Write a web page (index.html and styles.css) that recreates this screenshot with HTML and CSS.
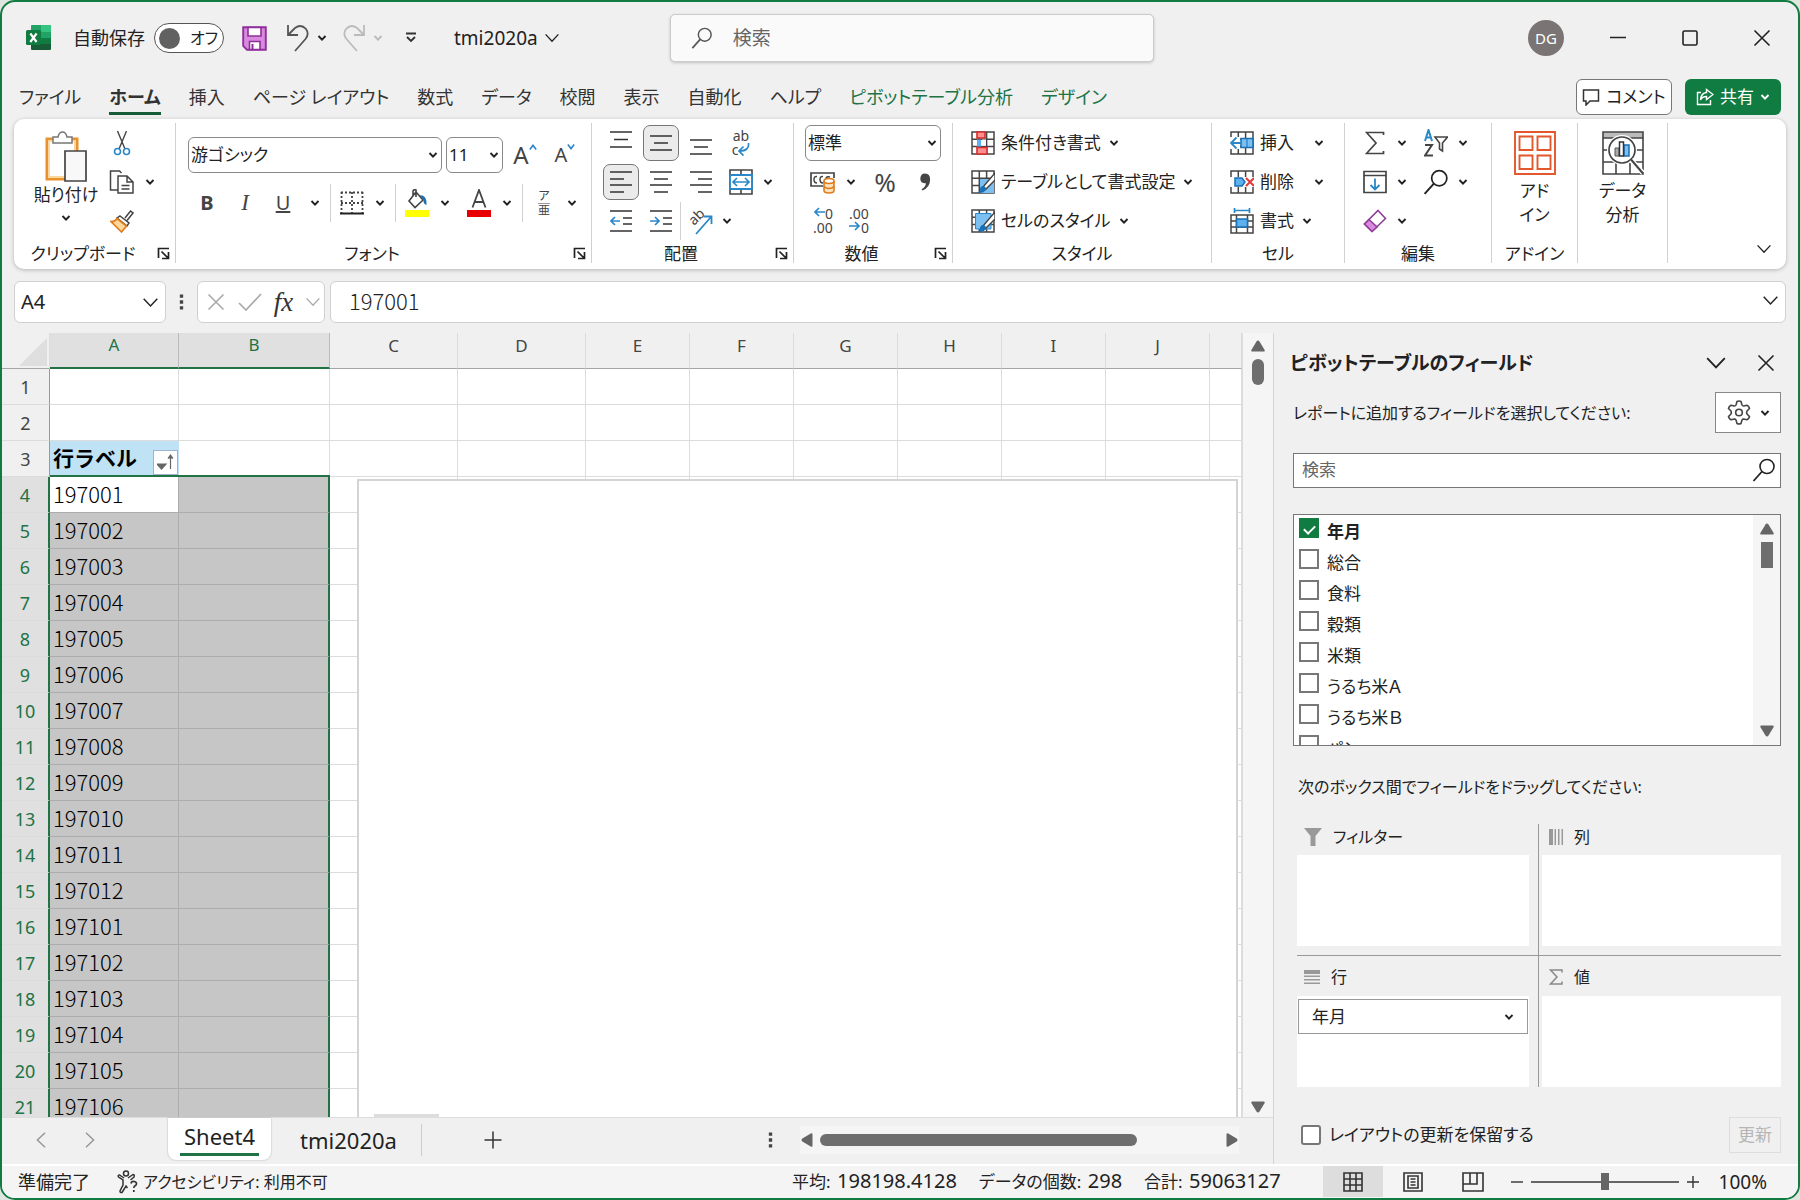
FILE: index.html
```html
<!DOCTYPE html>
<html lang="ja">
<head>
    <meta charset="UTF-8">
    <meta name="viewport" content="width=device-width, initial-scale=1.0">
    <title>tmi2020a - Excel</title>
    <link rel="stylesheet" href="styles.css">
</head>
<body>
    <!-- shared icons -->
    <svg class="sprite" aria-hidden="true">
        <symbol id="chev" viewBox="0 0 10 10"><path d="M1.5 3l3.5 3.7L8.5 3" fill="none" stroke="currentColor" stroke-width="1.9"/></symbol>
        <symbol id="chev-lg" viewBox="0 0 20 20"><path d="M2 5.5l8 8.5 8-8.5" fill="none" stroke="currentColor" stroke-width="1.7"/></symbol>
        <symbol id="cross" viewBox="0 0 20 20"><path d="M2.5 2.5l15 15M17.5 2.5l-15 15" fill="none" stroke="currentColor" stroke-width="1.6"/></symbol>
        <symbol id="lens" viewBox="0 0 24 24"><circle cx="15" cy="8.5" r="7" fill="none" stroke="currentColor" stroke-width="1.6"/><path d="M10 13.5L1.5 23" fill="none" stroke="currentColor" stroke-width="1.8"/></symbol>
        <symbol id="launch" viewBox="0 0 13 13"><path d="M1.5 11V1.5H12M4.5 4.5l6 6M11.5 5v6.5H5" fill="none" stroke="currentColor" stroke-width="1.7"/></symbol>
        <symbol id="tri-up" viewBox="0 0 14 12"><path d="M7 .5q.9 0 1.5.9l5 8.3q.8 1.8-1 1.8h-11q-1.8 0-1-1.8l5-8.3Q6.1.5 7 .5z" fill="#666"/></symbol>
        <symbol id="dots" viewBox="0 0 6 20"><path d="M1 1h4v4H1zM1 8h4v4H1zM1 15h4v4H1z" fill="#444"/></symbol>
        <symbol id="table-bg" viewBox="0 0 24 24"><path d="M1 1h22v22H1zM1 8.3h22M1 15.6h22M8.3 1v22M15.6 1v22" fill="none" stroke="#444" stroke-width="1.5"/></symbol>
    </svg>

    <div class="window">
        <header class="titlebar">
            <svg class="app-logo" viewBox="0 0 25 26">
                <path d="M6 0h18q1 0 1 1v7H5V1q0-1 1-1z" fill="#21a366"/><path d="M15 0h9q1 0 1 1v6H15z" fill="#33c481"/>
                <path d="M5 7h10v7H5z" fill="#107c41"/><path d="M15 7h10v7H15z" fill="#21a366"/>
                <path d="M5 13h20v11q0 1-1 1H6q-1 0-1-1z" fill="#185c37"/><path d="M15 13h10v6H15z" fill="#107c41"/>
                <rect y="5" width="15" height="15" rx="1.5" fill="#107c41"/>
                <path d="M4.3 8.5l6.3 8.5M10.6 8.5L4.3 17" stroke="#fff" stroke-width="2.1"/>
            </svg>
            <span class="autosave">自動保存</span>
            <button class="toggle" aria-label="自動保存"><span class="knob"></span>オフ</button>
            <button class="plain save" aria-label="上書き保存">
                <svg width="25" height="25" viewBox="0 0 25 25"><path d="M1.2 1.2h22.6v22.6H5l-3.8-4z" fill="#d98ae0" stroke="#8f2f99" stroke-width="1.9"/><path d="M6 1.5h13v8.5H6zM7.5 15.5h10.5v8H7.5z" fill="#fff" stroke="#8f2f99" stroke-width="1.6"/><path d="M10.5 18v5.5" stroke="#8f2f99" stroke-width="2"/></svg>
            </button>
            <button class="plain undo" aria-label="元に戻す">
                <svg width="24" height="28" viewBox="0 0 24 28"><path d="M2 1v10h10M2.5 10.5L9 4q6-4.500 11 1 3.500 5-.5 10L9 27" fill="none" stroke="#555" stroke-width="1.8"/></svg>
                <svg class="chev"><use href="#chev"/></svg>
            </button>
            <button class="plain undo redo" aria-label="やり直し">
                <svg width="24" height="28" viewBox="0 0 24 28"><path d="M22 1v10H12M21.5 10.5L15 4Q9-.5 4 5q-3.500 5 .5 10L15 27" fill="none" stroke="#bbb" stroke-width="1.8"/></svg>
                <svg class="chev"><use href="#chev"/></svg>
            </button>
            <button class="plain customize" aria-label="クイック アクセス ツール バー">
                <svg width="12" height="12" viewBox="0 0 12 12"><path d="M1 1.5h10M2 5l4 4 4-4" fill="none" stroke="#333" stroke-width="1.9"/></svg>
            </button>
            <button class="plain filename">tmi2020a <svg width="16" height="16"><use href="#chev-lg"/></svg></button>
            <label class="search">
                <svg width="22" height="22"><use href="#lens"/></svg>
                <input type="search" placeholder="検索" aria-label="検索">
            </label>
            <div class="win-buttons">
                <button class="avatar">DG</button>
                <button class="plain" aria-label="最小化"><svg width="18" height="18" viewBox="0 0 18 18"><path d="M1 8.5h16" stroke="#222" stroke-width="1.6"/></svg></button>
                <button class="plain" aria-label="最大化"><svg width="18" height="18" viewBox="0 0 18 18"><rect x="2" y="2" width="14" height="14" rx="1.5" fill="none" stroke="#222" stroke-width="1.6"/></svg></button>
                <button class="plain" aria-label="閉じる"><svg width="20" height="20"><use href="#cross"/></svg></button>
            </div>
        </header>

        <nav class="tabs">
            <a href="#">ファイル</a>
            <a href="#" class="active">ホーム</a>
            <a href="#">挿入</a>
            <a href="#">ページ レイアウト</a>
            <a href="#">数式</a>
            <a href="#">データ</a>
            <a href="#">校閲</a>
            <a href="#">表示</a>
            <a href="#">自動化</a>
            <a href="#">ヘルプ</a>
            <a href="#" class="context">ピボットテーブル分析</a>
            <a href="#" class="context">デザイン</a>
            <div class="tab-actions">
                <button class="comment"><svg width="18" height="18" viewBox="0 0 18 18"><path d="M1.5 2h15v11H8l-4 4v-4H1.5z" fill="none" stroke="#333" stroke-width="1.5"/></svg>コメント</button>
                <button class="share"><svg width="18" height="18" viewBox="0 0 18 18"><path d="M5 4.5H1.5v12h13V12M10.5 1.5l6.5 5-6.5 5V8.5Q6 8.5 4.500 12 5 5 10.5 4.500z" fill="none" stroke="#fff" stroke-width="1.4"/></svg>共有<svg class="chev"><use href="#chev"/></svg></button>
            </div>
        </nav>

        <section class="ribbon">
            <div class="group g-clip">
                <div class="body">
                    <button class="big paste">
                        <svg width="42" height="52" viewBox="0 0 42 52"><path d="M2 8h30v40H2z" fill="#fff" stroke="#e8912d" stroke-width="3"/><path d="M4 10h26v36H4z" fill="none" stroke="#fbd79b" stroke-width="2"/><path d="M8 12V6h5q1-5 4.500-5T22 6h5v6z" fill="#fff" stroke="#777" stroke-width="1.5"/><path d="M20 20h21v30H20z" fill="#f8f8f8" stroke="#444" stroke-width="1.7"/></svg>
                        貼り付け
                        <svg class="chev"><use href="#chev"/></svg>
                    </button>
                    <div class="rows">
                        <div class="row"><button class="ib" aria-label="切り取り"><svg width="18" height="26" viewBox="0 0 18 26"><path d="M4.500 1l7.500 18M13.500 1L6 19" stroke="#444" stroke-width="1.4"/><circle cx="4.5" cy="21.5" r="3" fill="none" stroke="#2b88c8" stroke-width="1.6"/><circle cx="13.5" cy="21.5" r="3" fill="none" stroke="#2b88c8" stroke-width="1.6"/></svg></button></div>
                        <div class="row"><button class="ib" aria-label="コピー"><svg width="26" height="24" viewBox="0 0 26 24"><path d="M9 20H1.5V1h9l2 2" fill="none" stroke="#444" stroke-width="1.5"/><path d="M9 6h9l6 6v11H9zM18 6v6h6M12.5 15.5h8M12.5 19h8" fill="none" stroke="#444" stroke-width="1.5"/></svg></button><button class="cv" aria-label="コピーの種類"><svg class="chev"><use href="#chev"/></svg></button></div>
                        <div class="row"><button class="ib" aria-label="書式のコピー"><svg width="24" height="24" viewBox="0 0 24 24"><path d="M15 9l5.500-7 2.500 2-6 7.500" fill="none" stroke="#444" stroke-width="1.5"/><path d="M10 7l9 7-2 3-10-8z" fill="#fff" stroke="#444" stroke-width="1.5"/><path d="M7 9.500l9.500 7.500-5 6L1 12.500q4 .5 6-3z" fill="#fbd79b" stroke="#e07b1c" stroke-width="1.6"/></svg></button></div>
                    </div>
                </div>
                <div class="caption"><span>クリップボード</span><button class="launch" aria-label="クリップボードの設定"><svg><use href="#launch"/></svg></button></div>
            </div>

            <div class="group g-font">
                <div class="body two">
                    <div class="row">
                        <span class="select font-name"><select aria-label="フォント"><option>游ゴシック</option></select><svg class="chev"><use href="#chev"/></svg></span>
                        <span class="select font-size"><select aria-label="フォント サイズ"><option>11</option></select><svg class="chev"><use href="#chev"/></svg></span>
                        <button class="ib letter grow" aria-label="フォント サイズの拡大">A<svg width="8" height="8" viewBox="0 0 10 10"><path d="M1 8l4-5 4 5" fill="none" stroke="#2b88c8" stroke-width="2"/></svg></button>
                        <button class="ib letter shrink" aria-label="フォント サイズの縮小">A<svg width="8" height="8" viewBox="0 0 10 10"><path d="M1 2l4 5 4-5" fill="none" stroke="#2b88c8" stroke-width="2"/></svg></button>
                    </div>
                    <div class="row styles">
                        <button class="ib letter"><b>B</b></button>
                        <button class="ib letter"><i>I</i></button>
                        <button class="ib letter"><u>U</u></button>
                        <button class="cv" aria-label="下線の種類"><svg class="chev"><use href="#chev"/></svg></button>
                        <span class="sep"></span>
                        <button class="ib" aria-label="罫線"><svg width="24" height="24" viewBox="0 0 24 24"><path d="M1 1.5h22M1 12h22M1.5 1v21M12 1v21M22.5 1v21" fill="none" stroke="#444" stroke-width="1.8" stroke-dasharray="2 2"/><path d="M0 22.5h24" stroke="#222" stroke-width="2.2"/></svg></button>
                        <button class="cv" aria-label="罫線の種類"><svg class="chev"><use href="#chev"/></svg></button>
                        <span class="sep"></span>
                        <button class="ib" aria-label="塗りつぶしの色"><svg width="24" height="28" viewBox="0 0 24 28"><path d="M0 21h24v7H0z" fill="#ff0"/><path d="M11 3l7 8-8 7.500-6-6.500zM11 8V1q-2-1-3 1v5" fill="none" stroke="#444" stroke-width="1.6"/><path d="M15 6q7 0 6.500 10-3.500-1-3-5z" fill="#1a6fb5"/></svg></button>
                        <button class="cv" aria-label="塗りつぶしの色の一覧"><svg class="chev"><use href="#chev"/></svg></button>
                        <button class="ib" aria-label="フォントの色"><svg width="24" height="28" viewBox="0 0 24 28"><path d="M0 21h24v7H0z" fill="#e80000"/><path d="M5.500 18.500L12 1l6.500 17.500M8 13h8" fill="none" stroke="#444" stroke-width="1.8"/></svg></button>
                        <button class="cv" aria-label="フォントの色の一覧"><svg class="chev"><use href="#chev"/></svg></button>
                        <span class="sep"></span>
                        <button class="ib ruby"><span>ア</span><span>亜</span></button>
                        <button class="cv" aria-label="ふりがなの設定"><svg class="chev"><use href="#chev"/></svg></button>
                    </div>
                </div>
                <div class="caption"><span>フォント</span><button class="launch" aria-label="フォントの設定"><svg><use href="#launch"/></svg></button></div>
            </div>

            <div class="group g-align">
                <div class="body rows">
                    <div class="row">
                        <button class="ib" aria-label="上揃え"><svg class="lines"><path d="M0 1h22M4 8.500h14M0 16h22"/></svg></button>
                        <button class="ib on" aria-label="上下中央揃え"><svg class="lines"><path d="M0 5h22M4 12h14M0 19h22"/></svg></button>
                        <button class="ib" aria-label="下揃え"><svg class="lines"><path d="M0 9h22M4 16h14M0 23h22"/></svg></button>
                        <button class="ib wrap"><span>ab</span><span>c<svg width="12" height="13" viewBox="0 0 12 13"><path d="M10.5 0q1 8-9 8M5.500 3.500L1 8l4.500 4.500" fill="none" stroke="#2b88c8" stroke-width="1.7"/></svg></span></button>
                    </div>
                    <div class="row">
                        <button class="ib on" aria-label="左揃え"><svg class="lines"><path d="M0 2h22M0 9h14M0 15h22M0 22h14"/></svg></button>
                        <button class="ib" aria-label="中央揃え"><svg class="lines"><path d="M0 2h22M4 9h14M0 15h22M4 22h14"/></svg></button>
                        <button class="ib" aria-label="右揃え"><svg class="lines"><path d="M0 2h22M8 9h14M0 15h22M8 22h14"/></svg></button>
                        <button class="ib" aria-label="セルを結合して中央揃え"><svg width="24" height="26" viewBox="0 0 24 26"><path d="M1 1h22v24H1zM12 1v24" fill="none" stroke="#444" stroke-width="1.6"/><path d="M1 6h22v14H1z" fill="#fff" stroke="#2b88c8" stroke-width="1.9"/><path d="M4 13h16M8 9l-4 4 4 4M16 9l4 4-4 4" fill="none" stroke="#2b88c8" stroke-width="1.7"/></svg></button>
                        <button class="cv" aria-label="結合の種類"><svg class="chev"><use href="#chev"/></svg></button>
                    </div>
                    <div class="row">
                        <button class="ib" aria-label="インデントを減らす"><svg class="lines"><path d="M0 2h22M13 9h9M13 15h9M0 22h22"/><path class="blue" d="M10 12H1M5 8l-4 4 4 4"/></svg></button>
                        <button class="ib" aria-label="インデントを増やす"><svg class="lines"><path d="M0 2h22M13 9h9M13 15h9M0 22h22"/><path class="blue" d="M0 12h9M5 8l4 4-4 4"/></svg></button>
                        <span class="sep"></span>
                        <button class="ib" aria-label="方向"><svg width="28" height="28" viewBox="0 0 28 28"><text transform="translate(8 19) rotate(-45)" font-size="14" fill="#444">ab</text><path d="M10 27L25 10M17.500 9.500H25.500V17" fill="none" stroke="#2b88c8" stroke-width="1.8"/></svg></button>
                        <button class="cv" aria-label="方向の種類"><svg class="chev"><use href="#chev"/></svg></button>
                    </div>
                </div>
                <div class="caption"><span>配置</span><button class="launch" aria-label="配置の設定"><svg><use href="#launch"/></svg></button></div>
            </div>

            <div class="group g-num">
                <div class="body rows">
                    <div class="row"><span class="select num-format"><select aria-label="数値の書式"><option>標準</option></select><svg class="chev"><use href="#chev"/></svg></span></div>
                    <div class="row">
                        <button class="ib" aria-label="通貨表示形式"><svg width="26" height="24" viewBox="0 0 26 24"><path d="M13 16H1V3h23v5" fill="none" stroke="#444" stroke-width="1.7"/><path d="M7 6.500Q4 6 4 9.500t3 3.500M13 6.500q-3-.5-3 3t3 3.500M20 7q-4-1-4 2" fill="none" stroke="#444" stroke-width="1.5"/><path d="M14 11v9.500q0 2.500 5 2.500t5-2.500V11" fill="#fde3bd" stroke="#e07b1c" stroke-width="1.6"/><ellipse cx="19" cy="11" rx="5" ry="2.5" fill="#fff" stroke="#e07b1c" stroke-width="1.6"/><path d="M14 16q1 2.500 5 2.500t5-2.500" fill="none" stroke="#e07b1c" stroke-width="1.5"/></svg></button>
                        <button class="cv" aria-label="通貨の種類"><svg class="chev"><use href="#chev"/></svg></button>
                        <button class="ib percent">%</button>
                        <button class="ib comma" aria-label="桁区切りスタイル"><svg width="12" height="20" viewBox="0 0 14 22"><path d="M7 1q6 0 6 7 0 9-9 13l-1-1.500q5-3 5-7-6 .5-6.500-5Q1.500 1 7 1z" fill="#444"/></svg></button>
                    </div>
                    <div class="row">
                        <button class="ib decimal"><span><svg width="12" height="10" viewBox="0 0 12 10"><path d="M12 5H2M6 1L2 5l4 4" fill="none" stroke="#2b88c8" stroke-width="1.7"/></svg>0</span><span>.00</span></button>
                        <button class="ib decimal"><span>.00</span><span><svg width="12" height="10" viewBox="0 0 12 10"><path d="M0 5h10M6 1l4 4-4 4" fill="none" stroke="#2b88c8" stroke-width="1.7"/></svg>0</span></button>
                    </div>
                </div>
                <div class="caption"><span>数値</span><button class="launch" aria-label="数値の設定"><svg><use href="#launch"/></svg></button></div>
            </div>

            <div class="group g-style">
                <div class="body rows">
                    <div class="row"><button class="tb"><svg width="24" height="24" viewBox="0 0 24 24"><use href="#table-bg"/><path d="M6 1h8v6H6zM6 16.500h10V23H6z" fill="#ff8f8f" stroke="#d92b2b" stroke-width="1.6"/><path d="M6 8.500h4v7H6z" fill="#5db1ec"/><path d="M11 8.500h4v6h-4z" fill="#fff"/></svg>条件付き書式<svg class="chev"><use href="#chev"/></svg></button></div>
                    <div class="row"><button class="tb"><svg width="24" height="24" viewBox="0 0 24 24"><use href="#table-bg"/><path d="M9 9h14v14H9z" fill="#7cc0f2"/><path d="M24 3L12 17l2.500 2.500L24 10z" fill="#fff" stroke="#444" stroke-width="1.4"/><path d="M12 16q3 0 3 3.500-2 4-8 3.500 3-1.500 2-4 .5-3 3-3z" fill="#1a6fb5"/></svg>テーブルとして書式設定<svg class="chev"><use href="#chev"/></svg></button></div>
                    <div class="row"><button class="tb"><svg width="24" height="24" viewBox="0 0 24 24"><use href="#table-bg"/><path d="M4.500 4.500H20V20H4.500z" fill="#7cc0f2" stroke="#2b88c8"/><path d="M24 3L12 17l2.500 2.500L24 10z" fill="#fff" stroke="#444" stroke-width="1.4"/><path d="M12 16q3 0 3 3.500-2 4-8 3.500 3-1.500 2-4 .5-3 3-3z" fill="#1a6fb5"/></svg>セルのスタイル<svg class="chev"><use href="#chev"/></svg></button></div>
                </div>
                <div class="caption"><span>スタイル</span></div>
            </div>

            <div class="group g-cells">
                <div class="body rows">
                    <div class="row"><button class="tb wide"><svg width="24" height="24" viewBox="0 0 24 24"><use href="#table-bg"/><path d="M0 6h10v12H0z" fill="#fff"/><path d="M11 7.500h12v9H11z" fill="#7cc0f2" stroke="#1a6fb5" stroke-width="1.5"/><path d="M17 7.500v9" stroke="#1a6fb5"/><path d="M12 12H1.500M6.500 6.500L1 12l5.500 5.500" fill="none" stroke="#2b88c8" stroke-width="1.8"/></svg>挿入<svg class="chev"><use href="#chev"/></svg></button></div>
                    <div class="row"><button class="tb wide"><svg width="24" height="24" viewBox="0 0 24 24"><use href="#table-bg"/><path d="M0 7h24v10H0z" fill="#fff"/><path d="M5 8h7l3 4-3 4H5z" fill="#5db1ec" stroke="#1a6fb5" stroke-width="1.5"/><path d="M16 8l8 8M24 8l-8 8" stroke="#e03a3a" stroke-width="2"/></svg>削除<svg class="chev"><use href="#chev"/></svg></button></div>
                    <div class="row"><button class="tb"><svg width="24" height="26" viewBox="0 0 24 26"><path d="M1 7h22v18H1zM1 13h22M1 19h22M6.500 7v18M17.500 7v18" fill="none" stroke="#444" stroke-width="1.5"/><path d="M6.500 11h11v8h-11z" fill="#5db1ec" stroke="#1a6fb5" stroke-width="1.5"/><path d="M4 2.500h16M4.500 0v5M19.500 0v5" stroke="#2b88c8" stroke-width="1.7"/></svg>書式<svg class="chev"><use href="#chev"/></svg></button></div>
                </div>
                <div class="caption"><span>セル</span></div>
            </div>

            <div class="group g-edit">
                <div class="body rows">
                    <div class="row">
                        <button class="ib" aria-label="オート SUM"><svg width="20" height="24" viewBox="0 0 20 24"><path d="M18.500 4V1.500H1.500L11 12 1.500 22.500h17V20" fill="none" stroke="#444" stroke-width="1.7"/></svg></button><button class="cv" aria-label="オート SUM の種類"><svg class="chev"><use href="#chev"/></svg></button>
                        <button class="ib" aria-label="並べ替えとフィルター"><svg width="24" height="28" viewBox="0 0 24 28"><path d="M1 12L4.500 1 8 12M2.500 8.500h4" fill="none" stroke="#2b88c8" stroke-width="2"/><path d="M1 16h7L1 26.500h8" fill="none" stroke="#444" stroke-width="2"/><path d="M11 8h12.500l-5 6v8l-3-2v-6z" fill="none" stroke="#444" stroke-width="1.6"/></svg></button><button class="cv" aria-label="並べ替えの種類"><svg class="chev"><use href="#chev"/></svg></button>
                    </div>
                    <div class="row">
                        <button class="ib" aria-label="フィル"><svg width="24" height="24" viewBox="0 0 24 24"><path d="M1 1.500h22v21H1zM1 5.500h22" fill="none" stroke="#444" stroke-width="1.7"/><path d="M12 8.500v11M7.500 15l4.500 4.500 4.500-4.500" fill="none" stroke="#2b88c8" stroke-width="1.8"/></svg></button><button class="cv" aria-label="フィルの種類"><svg class="chev"><use href="#chev"/></svg></button>
                        <button class="ib" aria-label="検索と選択"><svg width="26" height="26"><use href="#lens"/></svg></button><button class="cv" aria-label="検索の種類"><svg class="chev"><use href="#chev"/></svg></button>
                    </div>
                    <div class="row">
                        <button class="ib" aria-label="クリア"><svg width="24" height="24" viewBox="0 0 24 24"><path d="M15 1.500l7.500 8L9 22.500 1.500 15z" fill="#fff" stroke="#8f3f99" stroke-width="1.6"/><path d="M6 10.500l8 7.500-5 4.500L1.500 15z" fill="#d98ae0" stroke="#8f3f99" stroke-width="1.6"/></svg></button><button class="cv" aria-label="クリアの種類"><svg class="chev"><use href="#chev"/></svg></button>
                    </div>
                </div>
                <div class="caption"><span>編集</span></div>
            </div>

            <div class="group g-addin">
                <div class="body">
                    <button class="big"><svg width="42" height="44" viewBox="0 0 42 44"><path d="M1 1h40v42H1zM5.500 5.500h13V19h-13zM23.500 5.500h13V19h-13zM5.500 24.500h13V38h-13zM23.500 24.500h13V38h-13z" fill="none" stroke="#e2572b" stroke-width="1.9"/></svg><span>アド</span><span>イン</span></button>
                </div>
                <div class="caption"><span>アドイン</span></div>
            </div>

            <div class="group g-data">
                <div class="body">
                    <button class="big"><svg width="42" height="44" viewBox="0 0 42 44"><path d="M1 1h40v6H1z" fill="#bbb"/><path d="M1 1h40v42H1zM1 7h40M1 19h40M1 31h40M14 31v12M28 31v12" fill="none" stroke="#444" stroke-width="1.6"/><circle cx="20" cy="19" r="15" fill="#fff"/><path d="M13 17h4v8h-4z" fill="#aaa" stroke="#555"/><path d="M22 14h5v11h-5z" fill="#7cc0f2" stroke="#1a6fb5" stroke-width="1.5"/><path d="M17.500 11h4v14h-4z" fill="#fff" stroke="#333" stroke-width="1.5"/><circle cx="20" cy="19" r="13" fill="none" stroke="#444" stroke-width="1.7"/><path d="M29 29l12 13" stroke="#fff" stroke-width="5"/><path d="M29 28.500l12 14" stroke="#444" stroke-width="2"/></svg><span>データ</span><span>分析</span></button>
                </div>
                <div class="caption"></div>
            </div>
            <button class="plain collapse" aria-label="リボンを折りたたむ"><svg width="16" height="16"><use href="#chev-lg"/></svg></button>
        </section>

        <div class="formula-bar">
            <label class="name-box"><input type="text" value="A4" aria-label="名前ボックス"><svg width="17" height="17"><use href="#chev-lg"/></svg></label>
            <svg class="grip" width="5" height="18"><use href="#dots"/></svg>
            <div class="fx-box">
                <button class="plain" aria-label="キャンセル"><svg width="20" height="20"><use href="#cross"/></svg></button>
                <button class="plain" aria-label="入力"><svg width="24" height="18" viewBox="0 0 24 18"><path d="M1 10l7 7L23 1" fill="none" stroke="currentColor" stroke-width="1.7"/></svg></button>
                <button class="plain fx">fx</button>
                <button class="plain" aria-label="関数の一覧"><svg width="16" height="16"><use href="#chev-lg"/></svg></button>
            </div>
            <label class="formula"><input type="text" value="197001" aria-label="数式バー"><svg width="17" height="17"><use href="#chev-lg"/></svg></label>
        </div>

        <main class="main">
            <div class="sheet-area">
                <div class="grid-row">
                    <div class="grid-wrap">
                        <table class="grid">
                            <colgroup><col class="c-head"><col class="c-a"><col class="c-b"><col class="c-c"><col class="c-c"><col class="c-e"><col class="c-e"><col class="c-e"><col class="c-e"><col class="c-e"><col class="c-e"><col></colgroup>
                            <thead>
                                <tr><th class="corner"><svg width="28" height="28" viewBox="0 0 28 28"><path d="M28 0v28H0z" fill="#dedede"/></svg></th><th class="sel">A</th><th class="sel">B</th><th>C</th><th>D</th><th>E</th><th>F</th><th>G</th><th>H</th><th>I</th><th>J</th><th></th></tr>
                            </thead>
                            <tbody>
                                <tr><th>1</th><td></td><td></td><td></td><td></td><td></td><td></td><td></td><td></td><td></td><td></td><td></td></tr>
                                <tr><th>2</th><td></td><td></td><td></td><td></td><td></td><td></td><td></td><td></td><td></td><td></td><td></td></tr>
                                <tr><th>3</th><td class="pivot-head"><div>行ラベル<button aria-label="並べ替え"><svg width="18" height="18" viewBox="0 0 18 18"><path d="M0 11h9l-4.500 5zM13.500 16V2.500M11 5.500l2.500-3.500L16 5.500" fill="#666" stroke="#666" stroke-width="1.2"/></svg></button></div></td><td></td><td></td><td></td><td></td><td></td><td></td><td></td><td></td><td></td><td></td></tr>
                                <tr class="picked first"><th>4</th><td>197001</td><td></td><td></td><td></td><td></td><td></td><td></td><td></td><td></td><td></td><td></td></tr>
                                <tr class="picked"><th>5</th><td>197002</td><td></td><td></td><td></td><td></td><td></td><td></td><td></td><td></td><td></td><td></td></tr>
                                <tr class="picked"><th>6</th><td>197003</td><td></td><td></td><td></td><td></td><td></td><td></td><td></td><td></td><td></td><td></td></tr>
                                <tr class="picked"><th>7</th><td>197004</td><td></td><td></td><td></td><td></td><td></td><td></td><td></td><td></td><td></td><td></td></tr>
                                <tr class="picked"><th>8</th><td>197005</td><td></td><td></td><td></td><td></td><td></td><td></td><td></td><td></td><td></td><td></td></tr>
                                <tr class="picked"><th>9</th><td>197006</td><td></td><td></td><td></td><td></td><td></td><td></td><td></td><td></td><td></td><td></td></tr>
                                <tr class="picked"><th>10</th><td>197007</td><td></td><td></td><td></td><td></td><td></td><td></td><td></td><td></td><td></td><td></td></tr>
                                <tr class="picked"><th>11</th><td>197008</td><td></td><td></td><td></td><td></td><td></td><td></td><td></td><td></td><td></td><td></td></tr>
                                <tr class="picked"><th>12</th><td>197009</td><td></td><td></td><td></td><td></td><td></td><td></td><td></td><td></td><td></td><td></td></tr>
                                <tr class="picked"><th>13</th><td>197010</td><td></td><td></td><td></td><td></td><td></td><td></td><td></td><td></td><td></td><td></td></tr>
                                <tr class="picked"><th>14</th><td>197011</td><td></td><td></td><td></td><td></td><td></td><td></td><td></td><td></td><td></td><td></td></tr>
                                <tr class="picked"><th>15</th><td>197012</td><td></td><td></td><td></td><td></td><td></td><td></td><td></td><td></td><td></td><td></td></tr>
                                <tr class="picked"><th>16</th><td>197101</td><td></td><td></td><td></td><td></td><td></td><td></td><td></td><td></td><td></td><td></td></tr>
                                <tr class="picked"><th>17</th><td>197102</td><td></td><td></td><td></td><td></td><td></td><td></td><td></td><td></td><td></td><td></td></tr>
                                <tr class="picked"><th>18</th><td>197103</td><td></td><td></td><td></td><td></td><td></td><td></td><td></td><td></td><td></td><td></td></tr>
                                <tr class="picked"><th>19</th><td>197104</td><td></td><td></td><td></td><td></td><td></td><td></td><td></td><td></td><td></td><td></td></tr>
                                <tr class="picked"><th>20</th><td>197105</td><td></td><td></td><td></td><td></td><td></td><td></td><td></td><td></td><td></td><td></td></tr>
                                <tr class="picked"><th>21</th><td>197106</td><td></td><td></td><td></td><td></td><td></td><td></td><td></td><td></td><td></td><td></td></tr>
                            </tbody>
                        </table>
                        <!-- empty pivot chart floating over the cells -->
                        <div class="chart"><span class="chart-button"></span></div>
                    </div>
                    <div class="vscroll">
                        <svg class="arrow"><use href="#tri-up"/></svg>
                        <span class="thumb"></span>
                        <svg class="arrow down"><use href="#tri-up"/></svg>
                    </div>
                </div>
                <div class="sheet-bar">
                    <button class="plain nav" aria-label="前のシート"><svg class="left" width="18" height="18"><use href="#chev-lg"/></svg></button>
                    <button class="plain nav" aria-label="次のシート"><svg class="right" width="18" height="18"><use href="#chev-lg"/></svg></button>
                    <button class="sheet-tab current"><span>Sheet4</span></button>
                    <button class="sheet-tab">tmi2020a</button>
                    <button class="plain add-sheet" aria-label="新しいシート"><svg width="18" height="18" viewBox="0 0 18 18"><path d="M9 .5v17M.5 9h17" stroke="#333" stroke-width="1.5"/></svg></button>
                    <svg class="grip" width="5" height="18"><use href="#dots"/></svg>
                    <div class="hscroll">
                        <svg class="arrow left"><use href="#tri-up"/></svg>
                        <span class="thumb"></span>
                        <svg class="arrow right"><use href="#tri-up"/></svg>
                    </div>
                </div>
            </div>

            <aside class="pane">
                <div class="pane-title">
                    <h2>ピボットテーブルのフィールド</h2>
                    <button class="plain" aria-label="作業ウィンドウのオプション"><svg width="24" height="22"><use href="#chev-lg"/></svg></button>
                    <button class="plain" aria-label="閉じる"><svg width="20" height="20"><use href="#cross"/></svg></button>
                </div>
                <div class="pane-intro">
                    <p>レポートに追加するフィールドを選択してください:</p>
                    <button class="gear" aria-label="ツール"><svg width="26" height="26" viewBox="0 0 26 26"><path d="M10 5L11 1.500q2-1 4 0L16 5q.5 1 1.500 1l3.500-.8q2 1 2.500 3.300L21 11q-.6 1.500 0 3l2.500 2.500q-.5 2.300-2.500 3.300L17.500 19q-1 0-1.500 1l-1 3.500q-2 1-4 0L10 20q-.5-1-1.500-1l-3.500.8q-2-1-2.500-3.300L5 14q.6-1.500 0-3L2.500 8.500Q3 6.200 5 5.200L8.500 6Q9.500 6 10 5z" fill="none" stroke="#444" stroke-width="1.6" stroke-linejoin="round"/><circle cx="13" cy="12.5" r="3.300" fill="none" stroke="#444" stroke-width="1.6"/></svg><svg class="chev"><use href="#chev"/></svg></button>
                </div>
                <label class="pane-search"><input type="search" placeholder="検索" aria-label="フィールドの検索"><svg width="24" height="24"><use href="#lens"/></svg></label>
                <div class="fields">
                    <div class="field-list">
                        <label class="checked"><input type="checkbox" checked>年月</label>
                        <label><input type="checkbox">総合</label>
                        <label><input type="checkbox">食料</label>
                        <label><input type="checkbox">穀類</label>
                        <label><input type="checkbox">米類</label>
                        <label><input type="checkbox">うるち米Ａ</label>
                        <label><input type="checkbox">うるち米Ｂ</label>
                        <label><input type="checkbox">パン</label>
                    </div>
                    <div class="list-scroll">
                        <svg class="arrow"><use href="#tri-up"/></svg>
                        <span class="thumb"></span>
                        <svg class="arrow down"><use href="#tri-up"/></svg>
                    </div>
                </div>
                <p class="drag-hint">次のボックス間でフィールドをドラッグしてください:</p>
                <div class="zones">
                    <div class="zone">
                        <h3><svg width="18" height="18" viewBox="0 0 18 18"><path d="M0 0h18l-6.500 8v10h-5V8z" fill="#999"/></svg>フィルター</h3>
                        <div class="drop"></div>
                    </div>
                    <div class="zone">
                        <h3><svg width="14" height="16" viewBox="0 0 14 16"><path d="M0 0h4v16H0zM5.500 0H7v16H5.500zM9 0h1.500v16H9zM12.500 0H14v16h-1.500z" fill="#999"/></svg>列</h3>
                        <div class="drop"></div>
                    </div>
                    <div class="zone">
                        <h3><svg width="16" height="14" viewBox="0 0 16 14"><path d="M0 0h16v4H0zM0 5.500h16V7H0zM0 9h16v1.500H0zM0 12.500h16V14H0z" fill="#999"/></svg>行</h3>
                        <div class="drop"><button class="pill">年月<svg class="chev"><use href="#chev"/></svg></button></div>
                    </div>
                    <div class="zone">
                        <h3><svg width="14" height="16" viewBox="0 0 14 16"><path d="M13 3.500V1H1.500L8 8l-6.500 7H13v-2.500" fill="none" stroke="#888" stroke-width="1.5"/></svg>値</h3>
                        <div class="drop"></div>
                    </div>
                </div>
                <div class="pane-foot">
                    <label><input type="checkbox">レイアウトの更新を保留する</label>
                    <button disabled>更新</button>
                </div>
            </aside>
        </main>

        <footer class="status">
            <span>準備完了</span>
            <button class="plain access"><svg width="22" height="24" viewBox="0 0 22 24"><circle cx="9" cy="3.5" r="2.5" fill="none" stroke="#333" stroke-width="1.5"/><path d="M7 8L2.500 5Q.5 5 1.500 7L6 10v5l-3 6q0 2 2 1.500L9 16l1.500 2M11 8l5-3.500q2 .5 1 2.500l-3.500 3" fill="none" stroke="#333" stroke-width="1.5"/><path d="M14 13.500q.5-2.500 3.500-2 3 1 1.500 3.500-2 1-2.200 3M16.800 20v2" fill="none" stroke="#333" stroke-width="1.7"/></svg>アクセシビリティ: 利用不可</button>
            <div class="stats"><span>平均: <em>198198.4128</em></span><span>データの個数: <em>298</em></span><span>合計: <em>59063127</em></span></div>
            <div class="views">
                <button class="on" aria-label="標準"><svg width="20" height="20" viewBox="0 0 20 20"><path d="M1 1h18v18H1zM1 7h18M1 13h18M7 1v18M13 1v18" fill="none" stroke="#333" stroke-width="1.6"/></svg></button>
                <button aria-label="ページ レイアウト"><svg width="20" height="20" viewBox="0 0 20 20"><path d="M1 1h18v18H1zM5 4h10v12H5zM7.500 7h5M7.500 10h5M7.500 13h5" fill="none" stroke="#333" stroke-width="1.6"/></svg></button>
                <button aria-label="改ページ プレビュー"><svg width="22" height="20" viewBox="0 0 22 20"><path d="M1 1h20v18H1zM1 12h14V1M8 1v11" fill="none" stroke="#333" stroke-width="1.6"/></svg></button>
            </div>
            <div class="zoom">
                <button class="plain" aria-label="縮小"><svg width="12" height="12" viewBox="0 0 12 12"><path d="M0 6h12" stroke="#333" stroke-width="1.4"/></svg></button>
                <input type="range" min="10" max="190" value="100" aria-label="ズーム">
                <button class="plain" aria-label="拡大"><svg width="12" height="12" viewBox="0 0 12 12"><path d="M0 6h12M6 0v12" stroke="#333" stroke-width="1.4"/></svg></button>
                <span>100%</span>
            </div>
        </footer>
    </div>
</body>
</html>
```

FILE: styles.css
```css
* {
    box-sizing: border-box;
}

body {
    margin: 0;
    background: #dfe5df;
    font-family: "Noto Sans", "Noto Sans CJK JP", sans-serif;
    font-feature-settings: "palt";
    font-size: 17px;
    line-height: 24px;
    color: #222;
}

button,
input,
select {
    font: inherit;
    font-feature-settings: inherit;
    color: inherit;
    margin: 0;
}

button {
    padding: 0;
    border: 0;
    background: none;
    white-space: nowrap;
    cursor: pointer;
}

svg {
    display: block;
    flex: none;
}

.sprite {
    display: none;
}

.chev {
    width: 10px;
    height: 10px;
}

.plain {
    display: flex;
    align-items: center;
    justify-content: center;
}

.window {
    display: flex;
    flex-direction: column;
    height: 100vh;
    border: 2px solid #107c41;
    border-radius: 15px;
    background: #f0f0f0;
    overflow: hidden;
}

/* title bar */
.titlebar {
    display: flex;
    align-items: center;
    height: 72px;
    flex: none;
    padding: 0 12px 0 24px;
}

.app-logo {
    width: 25px;
    height: 26px;
}

.autosave {
    margin: 0 9px 0 22px;
    font-size: 18px;
}

.toggle {
    display: flex;
    align-items: center;
    gap: 10px;
    width: 70px;
    height: 30px;
    padding-left: 4px;
    border: 1px solid #555;
    border-radius: 15px;
    background: #fff;
    font-size: 16px;
}

.knob {
    width: 21px;
    height: 21px;
    border-radius: 50%;
    background: #616161;
}

.save {
    margin-left: 18px;
}

.undo {
    gap: 7px;
    margin-left: 19px;
}

.redo {
    margin-left: 15px;
    color: #bbb;
}

.customize {
    margin-left: 22px;
}

.filename {
    gap: 6px;
    margin-left: 37px;
    font-size: 19px;
}

.search {
    display: flex;
    align-items: center;
    gap: 20px;
    flex: 0 1 484px;
    height: 48px;
    margin-left: 110px;
    padding: 0 20px;
    border: 1px solid #ccc;
    border-radius: 5px;
    background: #fafafa;
    box-shadow: 0 1px 3px rgba(0, 0, 0, 0.2);
    color: #555;
}

.search input,
.pane-search input,
.name-box input,
.formula input {
    flex: 1;
    min-width: 0;
    padding: 0;
    border: 0;
    outline: 0;
    background: none;
    appearance: none;
}

input::placeholder {
    color: #666;
    opacity: 1;
}

.search input {
    font-size: 19px;
}

.win-buttons {
    display: flex;
    align-items: center;
    margin-left: auto;
}

.win-buttons .plain {
    width: 72px;
    height: 36px;
}

.win-buttons .plain:last-child {
    width: 48px;
    margin: 0 0 0 12px;
}

.avatar {
    width: 36px;
    height: 36px;
    margin-right: 18px;
    border-radius: 50%;
    background: #7a7574;
    color: #fff;
    font-size: 15px;
}

/* tabs */
.tabs {
    display: flex;
    align-items: center;
    gap: 28px;
    height: 45px;
    flex: none;
    padding: 0 17px;
    font-size: 18px;
}

.tabs a {
    height: 36px;
    border-bottom: 3px solid transparent;
    line-height: 37px;
    color: #333;
    text-decoration: none;
    white-space: nowrap;
}

.tabs .active {
    border-bottom-color: #185c37;
    font-weight: 700;
}

.tabs .context {
    color: #217346;
}

.tab-actions {
    display: flex;
    gap: 13px;
    margin-left: auto;
}

.tab-actions button {
    display: flex;
    align-items: center;
    justify-content: center;
    gap: 6px;
    width: 96px;
    height: 36px;
    border-radius: 6px;
    font-size: 17px;
}

.comment {
    border: 1px solid #777;
    background: #fff;
}

.share {
    background: #107c41;
    color: #fff;
}

/* ribbon */
.ribbon {
    display: flex;
    flex: none;
    height: 150px;
    margin: 0 12px;
    padding: 4px 0 6px;
    border-radius: 10px;
    background: #fff;
    box-shadow: 0 1px 4px rgba(0, 0, 0, 0.25);
}

.group {
    display: flex;
    flex-direction: column;
    border-right: 1px solid #d0d0d0;
}

.body {
    display: flex;
    flex: none;
    height: 117px;
}

.rows {
    display: flex;
    flex-direction: column;
}

.row {
    display: flex;
    align-items: center;
    height: 39px;
}

.caption {
    display: flex;
    align-items: center;
    flex: 1;
    padding-top: 4px;
    line-height: 19px;
}

.caption span {
    flex: 1;
    text-align: center;
}

.launch {
    margin: 0 5px;
}

.launch svg {
    width: 13px;
    height: 13px;
}

.g-clip { width: 162px; }
.g-font { width: 416px; }
.g-align { width: 202px; }
.g-num { width: 159px; }
.g-style { width: 259px; }
.g-cells { width: 133px; }
.g-edit { width: 147px; }
.g-addin { width: 86px; }
.g-data { width: 90px; }

.ib {
    display: flex;
    align-items: center;
    justify-content: center;
    width: 36px;
    height: 36px;
}

.cv {
    display: flex;
    align-items: center;
    justify-content: center;
    width: 20px;
    height: 36px;
}

.tb {
    display: flex;
    align-items: center;
    gap: 6px;
}

.tb .chev {
    margin-left: 2px;
}

.tb.wide .chev {
    margin-left: 14px;
}

.sep {
    width: 1px;
    height: 38px;
    background: #d0d0d0;
}

.big {
    display: flex;
    flex-direction: column;
    align-items: center;
    width: 100%;
    padding-top: 8px;
}

.paste {
    width: 86px;
    padding-left: 4px;
    margin-left: 7px;
}

.paste .chev {
    margin-top: 6px;
}

.g-clip .rows {
    margin-left: -3px;
}

.g-addin .big svg,
.g-data .big svg {
    margin-bottom: 4px;
}

.two {
    flex-direction: column;
    padding: 8px 0 0 12px;
}

.two .row {
    height: 48px;
}

.select {
    display: grid;
    align-items: center;
    height: 36px;
}

.select select,
.select svg {
    grid-area: 1 / 1;
}

.select select {
    width: 100%;
    height: 36px;
    padding: 0 2px;
    border: 1px solid #888;
    border-radius: 6px;
    background: #fff;
    appearance: none;
}

.select svg {
    justify-self: end;
    margin-right: 4px;
    pointer-events: none;
}

.font-name { width: 254px; }
.font-size { width: 57px; margin-left: 4px; }
.num-format { width: 136px; }

.letter {
    color: #444;
    font-size: 20px;
}

.letter svg {
    align-self: flex-start;
    margin-top: 6px;
}

.grow {
    margin-left: 4px;
    font-size: 24px;
}

.shrink {
    margin-left: 4px;
}

.letter i {
    font-family: "Liberation Serif", serif;
    font-size: 23px;
}

.styles .letter {
    width: 38px;
}

.styles .sep {
    margin: 0 6px 0 2px;
}

.styles .ib ~ .ib:not(.letter) {
    width: 30px;
}

.styles .cv {
    width: 26px;
}

.styles .cv + .ib {
    margin-left: 6px;
}

.ruby {
    flex-direction: column;
    color: #444;
    font-size: 12px;
    line-height: 14px;
}

.ruby span:first-child {
    border-bottom: 1px solid #999;
}

.on {
    border: 1px solid #777;
    border-radius: 7px;
    background: #ebebeb;
}

.lines {
    width: 22px;
    height: 24px;
    fill: none;
    stroke: #333;
    stroke-width: 1.7px;
}

.lines .blue {
    stroke: #2b88c8;
}

.g-align .row {
    gap: 4px;
    padding-left: 11px;
}

.g-align .cv {
    width: 10px;
}

.g-align .sep {
    margin: 0 -3px;
}

.wrap,
.decimal {
    flex-direction: column;
    color: #444;
    font-size: 14px;
    line-height: 14px;
}

.wrap span,
.decimal span {
    display: flex;
}

.g-num .row {
    padding-left: 11px;
}

.percent {
    margin-left: 6px;
    color: #444;
    font-size: 26px;
}

.comma {
    margin-left: 4px;
}

.g-style .row,
.g-cells .row {
    padding-left: 18px;
}

.g-edit .row {
    padding-left: 12px;
}

.g-edit .cv {
    width: 18px;
}

.g-edit .cv + .ib {
    margin-left: 7px;
}

.collapse {
    align-self: flex-end;
    margin: 0 14px 6px auto;
}

/* formula bar */
.formula-bar {
    display: flex;
    align-items: center;
    flex: none;
    height: 42px;
    margin: 12px 12px 10px;
}

.name-box,
.fx-box,
.formula {
    display: flex;
    align-items: center;
    height: 42px;
    padding: 0 6px;
    border: 1px solid #d0d0d0;
    border-radius: 6px;
    background: #fff;
}

.name-box {
    width: 152px;
    font-size: 20px;
}

.grip {
    margin: 0 13px;
}

.fx-box {
    justify-content: space-between;
    width: 128px;
    padding: 0 3px 0 8px;
    color: #aaa;
}

.fx {
    color: #333;
    font-family: "Liberation Serif", serif;
    font-size: 27px;
    font-style: italic;
}

.formula {
    flex: 1;
    margin-left: 5px;
    padding: 0 6px 4px 18px;
    font-family: "Noto Sans CJK JP", sans-serif;
    font-size: 22px;
    font-weight: 300;
}

/* worksheet */
.main {
    display: flex;
    flex: 1;
    min-height: 0;
}

.sheet-area {
    display: flex;
    flex-direction: column;
    flex: 1;
    min-width: 0;
}

.grid-row {
    display: flex;
    flex: 1;
    min-height: 0;
}

.grid-wrap {
    position: relative;
    flex: 1;
    min-width: 0;
    overflow: hidden;
    border-right: 1px solid #ddd;
}

.grid {
    width: 100%;
    table-layout: fixed;
    border-collapse: separate;
    border-spacing: 0;
    background: #fff;
}

.c-head { width: 48px; }
.c-a { width: 129px; }
.c-b { width: 151px; }
.c-c { width: 128px; }
.c-e { width: 104px; }

.grid th {
    height: 36px;
    padding: 0;
    border: solid #dcdcdc;
    border-width: 0 1px 1px 0;
    background: #f0f0f0;
    color: #444;
    font-size: 18px;
    font-weight: 400;
}

.grid thead th {
    height: 35px;
    padding-bottom: 10px;
    border-bottom: 1px solid #a6a6a6;
    font-size: 17px;
}

.grid thead .corner {
    padding: 0 2px 2px 0;
    vertical-align: bottom;
}

.corner svg {
    margin-left: auto;
}

.grid .sel {
    border-right-color: #bbb;
    border-bottom: 2px solid #217346;
    background: #e0e0e0;
    color: #217346;
}

.grid tbody th {
    border-right-color: #999;
}

.grid td {
    height: 36px;
    padding: 0 0 4px 3px;
    border: solid #dcdcdc;
    border-width: 0 1px 1px 0;
    color: #000;
    font-family: "Noto Sans CJK JP", sans-serif;
    font-feature-settings: normal;
    font-size: 22px;
    font-weight: 300;
    line-height: 30px;
}

.grid .picked th {
    border-right: 2px solid #217346;
    background: #e0e0e0;
    color: #217346;
}

.picked td:nth-child(2),
.picked td:nth-child(3) {
    border-color: #adadad;
    background: #c6c6c6;
}

.grid .picked td:nth-child(3) {
    border-right: 2px solid #217346;
}

.first td:nth-child(2) {
    background: #fff;
}

.first td:nth-child(2),
.first td:nth-child(3) {
    box-shadow: 0 -2px #217346;
}

.grid .pivot-head {
    border-color: #bfe3f5;
    background: #bfe3f5;
    font-size: 21px;
    font-weight: 700;
}

.pivot-head div {
    display: flex;
    align-items: center;
    justify-content: space-between;
    height: 30px;
}

.pivot-head button {
    display: grid;
    place-items: center;
    width: 25px;
    height: 25px;
    margin-top: 11px;
    border: 1px solid #9cb4d0;
    background: #fff;
}

.chart {
    position: absolute;
    top: 146px;
    right: 4px;
    bottom: 0;
    left: 355px;
    display: flex;
    align-items: flex-end;
    padding-left: 15px;
    border: 2px solid #d4d4d4;
    border-bottom: 0;
    background: #fff;
}

.chart-button {
    width: 65px;
    height: 3px;
    background: #ddd;
}

.vscroll,
.list-scroll {
    display: flex;
    flex-direction: column;
    align-items: center;
    background: #f5f5f5;
}

.vscroll {
    width: 30px;
    padding: 7px 0 4px;
}

.thumb {
    background: #6e6e6e;
}

.vscroll .thumb {
    width: 12px;
    height: 26px;
    margin-top: 7px;
    border-radius: 6px;
}

.arrow {
    width: 14px;
    height: 12px;
}

.arrow.down {
    margin-top: auto;
    transform: rotate(180deg);
}

.arrow.left,
.nav .right {
    transform: rotate(-90deg);
}

.arrow.right,
.nav .left {
    transform: rotate(90deg);
}

.sheet-bar {
    display: flex;
    align-items: center;
    flex: none;
    height: 47px;
    padding: 0 34px 2px 0;
    border-top: 1px solid #ddd;
}

.nav {
    width: 49px;
    color: #999;
}

.nav:first-child {
    margin-left: 14px;
}

.sheet-tab {
    height: 32px;
    padding: 0 24px 0 22px;
    border-right: 1px solid #ccc;
    font-size: 22px;
}

.sheet-tab.current {
    align-self: flex-start;
    height: 42px;
    margin: 0 7px 0 54px;
    padding: 0 12px 4px;
    border: 0;
    border-radius: 0 0 8px 8px;
    background: #fff;
    box-shadow: 0 0 2px rgba(0, 0, 0, 0.3);
}

.current span {
    display: block;
    height: 38px;
    padding: 0 4px;
    border-bottom: 3px solid #217346;
    line-height: 36px;
}

.add-sheet {
    margin-left: 62px;
}

.sheet-bar .grip {
    margin: 0 27px 0 auto;
}

.hscroll {
    display: flex;
    align-items: center;
    flex: 0 1 439px;
    height: 28px;
    background: #f5f5f5;
}

.hscroll .thumb {
    flex: 0 1 317px;
    height: 12px;
    margin-left: 6px;
    border-radius: 6px;
}

.hscroll .right {
    margin-left: auto;
}

/* field pane */
.pane {
    display: flex;
    flex-direction: column;
    width: 525px;
    flex: none;
    padding: 10px 17px 0 19px;
    border-left: 1px solid #d4d4d4;
}

.pane-title {
    display: flex;
    align-items: center;
    height: 40px;
}

.pane h2 {
    flex: 1;
    margin: 0 0 0 -3px;
    font-size: 19px;
    font-weight: 700;
}

.pane-title button {
    width: 30px;
    height: 30px;
    margin-left: 20px;
}

.pane-intro {
    display: flex;
    align-items: center;
    justify-content: space-between;
    margin-top: 9px;
}

.pane p {
    margin: 0;
    font-size: 16px;
}

.gear {
    display: flex;
    align-items: center;
    justify-content: center;
    gap: 8px;
    width: 66px;
    height: 41px;
    border: 1px solid #888;
    background: #fff;
}

.pane-search {
    display: flex;
    align-items: center;
    height: 35px;
    margin-top: 20px;
    padding: 0 4px 2px 8px;
    border: 1px solid #777;
    background: #fff;
}

.fields {
    display: flex;
    height: 232px;
    margin-top: 26px;
    border: 1px solid #777;
    background: #fff;
}

.field-list {
    flex: 1;
    overflow: hidden;
    padding: 3px 0 0 5px;
}

.field-list label,
.pane-foot label {
    display: flex;
    gap: 8px;
}

.field-list label {
    height: 31px;
    line-height: 28px;
}

.checked {
    font-weight: 700;
}

.pane input[type="checkbox"] {
    appearance: none;
    width: 20px;
    height: 20px;
    border: 2px solid #777;
    background: #fff;
}

.pane input[type="checkbox"]:checked {
    display: grid;
    place-items: center;
    border-color: #107c41;
    background: #107c41;
}

.pane input[type="checkbox"]:checked::before {
    content: "";
    width: 9px;
    height: 5px;
    border: solid #fff;
    border-width: 0 0 2px 2px;
    transform: rotate(-45deg);
}

.list-scroll {
    width: 27px;
    padding: 8px 0;
}

.list-scroll .thumb {
    width: 12px;
    height: 26px;
    margin-top: 7px;
}

.pane .drag-hint {
    margin: 29px 0 25px 5px;
}

.zones {
    display: grid;
    grid-template-columns: 1fr 1fr;
    margin-left: 4px;
}

.zone {
    padding-bottom: 9px;
}

.zone:nth-child(odd) {
    padding-right: 9px;
    border-right: 1px solid #999;
}

.zone:nth-child(even) {
    padding-left: 3px;
}

.zone:nth-child(-n + 2) {
    border-bottom: 1px solid #999;
}

.zone:nth-child(n + 3) {
    padding-bottom: 0;
}

.zone h3 {
    display: flex;
    align-items: center;
    gap: 11px;
    height: 31px;
    margin: 0;
    padding: 0 0 5px 7px;
    font-size: 16px;
    font-weight: 400;
}

.zone:nth-child(n + 3) h3 {
    height: 40px;
    padding-top: 6px;
}

.drop {
    height: 91px;
    padding: 3px 1px;
    background: #fff;
}

.pill {
    display: flex;
    align-items: center;
    justify-content: space-between;
    width: 100%;
    height: 35px;
    padding: 0 13px;
    border: 1px solid #999;
    background: #fff;
}

.pane-foot {
    display: flex;
    align-items: center;
    justify-content: space-between;
    margin: 30px 0 0 8px;
}

.pane-foot label {
    align-items: center;
}

.pane-foot input[type="checkbox"] {
    border-radius: 3px;
}

.pane-foot button {
    width: 52px;
    height: 36px;
    border: 1px solid #ddd;
    color: #b5b5b5;
}

/* status bar */
.status {
    display: flex;
    align-items: center;
    flex: none;
    height: 34px;
    padding: 0 31px 1px 16px;
    border-top: 2px solid #fff;
    background: #f4f4f4;
}

.status > span {
    font-size: 18px;
}

.access {
    gap: 4px;
    margin-left: 27px;
    font-size: 16px;
}

.stats {
    display: flex;
    gap: 22px;
    margin-left: auto;
    margin-right: 42px;
}

.stats em {
    margin-left: 2px;
    font-size: 20px;
    font-style: normal;
}

.views {
    display: flex;
}

.views button {
    display: grid;
    place-items: center;
    width: 60px;
    height: 31px;
}

.views .on {
    border: 0;
    border-radius: 0;
    background: #ddd;
}

.zoom {
    display: flex;
    align-items: center;
    gap: 8px;
    margin-left: 8px;
    font-size: 19px;
}

.zoom span {
    margin-left: 12px;
}

.zoom input {
    appearance: none;
    width: 148px;
    height: 20px;
    background: linear-gradient(#666, #666) center / 100% 2px no-repeat;
}

.zoom input::-webkit-slider-thumb {
    appearance: none;
    width: 8px;
    height: 17px;
    background: #666;
}
```
